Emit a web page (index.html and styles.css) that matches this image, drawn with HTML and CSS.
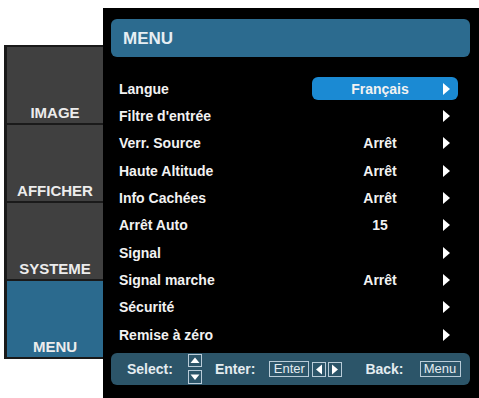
FILE: index.html
```html
<!DOCTYPE html>
<html lang="fr">
<head>
    <meta charset="UTF-8">
    <meta name="viewport" content="width=device-width, initial-scale=1.0">
    <title>Menu OSD - Projecteur</title>
    <link rel="stylesheet" href="styles.css">
</head>
<body>
    <div class="ecran">
        <!-- Onglets de gauche -->
        <div class="onglets">
            <div class="onglet">IMAGE</div>
            <div class="onglet">AFFICHER</div>
            <div class="onglet">SYSTEME</div>
            <div class="onglet actif">MENU</div>
        </div>

        <div class="panneau">
            <div class="panneau-titre">MENU</div>

            <ul class="liste">
                <li class="ligne">
                    <span class="libelle">Langue</span>
                    <span class="option choisie"><span class="valeur">Français</span><span class="fleche"></span></span>
                </li>
                <li class="ligne">
                    <span class="libelle">Filtre d'entrée</span>
                    <span class="option"><span class="valeur"></span><span class="fleche"></span></span>
                </li>
                <li class="ligne">
                    <span class="libelle">Verr. Source</span>
                    <span class="option"><span class="valeur">Arrêt</span><span class="fleche"></span></span>
                </li>
                <li class="ligne">
                    <span class="libelle">Haute Altitude</span>
                    <span class="option"><span class="valeur">Arrêt</span><span class="fleche"></span></span>
                </li>
                <li class="ligne">
                    <span class="libelle">Info Cachées</span>
                    <span class="option"><span class="valeur">Arrêt</span><span class="fleche"></span></span>
                </li>
                <li class="ligne">
                    <span class="libelle">Arrêt Auto</span>
                    <span class="option"><span class="valeur">15</span><span class="fleche"></span></span>
                </li>
                <li class="ligne">
                    <span class="libelle">Signal</span>
                    <span class="option"><span class="valeur"></span><span class="fleche"></span></span>
                </li>
                <li class="ligne">
                    <span class="libelle">Signal marche</span>
                    <span class="option"><span class="valeur">Arrêt</span><span class="fleche"></span></span>
                </li>
                <li class="ligne">
                    <span class="libelle">Sécurité</span>
                    <span class="option"><span class="valeur"></span><span class="fleche"></span></span>
                </li>
                <li class="ligne">
                    <span class="libelle">Remise à zéro</span>
                    <span class="option"><span class="valeur"></span><span class="fleche"></span></span>
                </li>
            </ul>

            <!-- Barre d'aide -->
            <div class="aide">
                <span>Select:</span>
                <svg class="haut-bas" width="14" height="30" viewBox="0 0 14 30">
                    <rect x="0.5" y="0.5" width="13" height="12" fill="none" stroke="#b9ccd8"/>
                    <polygon points="2.5,9 7,3.5 11.5,9" fill="#ffffff"/>
                    <rect x="0.5" y="16.5" width="13" height="13" fill="none" stroke="#b9ccd8"/>
                    <polygon points="2.5,20.5 11.5,20.5 7,26" fill="#ffffff"/>
                </svg>
                <span class="aide-enter">Enter:</span>
                <span class="touche touche-enter">Enter</span>
                <svg class="touche-fleche gauche" width="14" height="15" viewBox="0 0 14 15">
                    <rect x="0.5" y="0.5" width="13" height="14" fill="none" stroke="#b9ccd8"/>
                    <polygon points="10,2.5 10,12.5 4,7.5" fill="#ffffff"/>
                </svg>
                <svg class="touche-fleche droite" width="14" height="15" viewBox="0 0 14 15">
                    <rect x="0.5" y="0.5" width="13" height="14" fill="none" stroke="#b9ccd8"/>
                    <polygon points="4,2.5 4,12.5 10,7.5" fill="#ffffff"/>
                </svg>
                <span class="aide-back">Back:</span>
                <span class="touche touche-menu">Menu</span>
            </div>
        </div>
    </div>
</body>
</html>
```

FILE: styles.css
```css
body {
    margin: 0;
    background-color: #ffffff;
    font-family: 'Liberation Sans', Arial, sans-serif;
    font-weight: bold;
    color: #f2f2f2;
    overflow: hidden;
}
.ecran {
    display: flex;
    align-items: flex-start;
    height: 398px;
}
.onglets {
    width: 99px;
    margin-top: 45px;
    margin-left: 4px;
    padding: 2px 0 2px 3px;
    box-sizing: border-box;
    background: #1a1a1a;
    display: flex;
    flex-direction: column;
    gap: 2px;
}
.onglet {
    height: 76px;
    box-sizing: border-box;
    padding-bottom: 2px;
    background: #404040;
    display: flex;
    align-items: flex-end;
    justify-content: center;
    font-size: 15px;
    line-height: 16px;
    color: #ececec;
}
.onglet.actif {
    background: #2b6a8e;
}
.panneau {
    flex: 1;
    height: 390px;
    margin-top: 8px;
    padding: 11px 9px 0 8px;
    box-sizing: border-box;
    background: #000000;
}
.panneau-titre {
    height: 38px;
    padding: 1px 0 0 12px;
    box-sizing: border-box;
    background: #2c6b8f;
    border-radius: 6px;
    display: flex;
    align-items: center;
    font-size: 17px;
    color: #e6eef3;
    margin-bottom: 18px;
}
.liste {
    list-style: none;
    margin: 0;
    padding: 0;
}
.ligne {
    height: 27.33px;
    padding: 0 12px 0 8px;
    display: flex;
    align-items: center;
    font-size: 14px;
}
.libelle {
    flex: 1;
}
.option {
    width: 146px;
    height: 23px;
    padding: 0 8px 0 13px;
    box-sizing: border-box;
    display: flex;
    align-items: center;
}
.option.choisie {
    background: #1b8ad3;
    border-radius: 6px;
}
.valeur {
    width: 110px;
    text-align: center;
}
.fleche {
    margin-left: 8px;
    width: 0;
    height: 0;
    border-left: 7px solid #ffffff;
    border-top: 6px solid transparent;
    border-bottom: 6px solid transparent;
}
.aide {
    height: 32px;
    margin-top: 5px;
    padding-left: 16px;
    background: #2c5569;
    border-radius: 6px;
    display: flex;
    align-items: center;
    font-size: 14px;
    color: #e4ecf0;
}
.haut-bas {
    margin-left: 15px;
}
.aide-enter {
    margin-left: 13px;
}
.touche {
    height: 14px;
    border: 1px solid #b9ccd8;
    font-weight: normal;
    font-size: 13px;
    line-height: 14px;
    text-align: center;
}
.touche-enter {
    width: 38px;
    margin-left: 14px;
}
.touche-fleche.gauche {
    margin-left: 3px;
}
.touche-fleche.droite {
    margin-left: 2px;
}
.aide-back {
    margin-left: 23px;
}
.touche-menu {
    width: 39px;
    margin-left: 16px;
}
```
